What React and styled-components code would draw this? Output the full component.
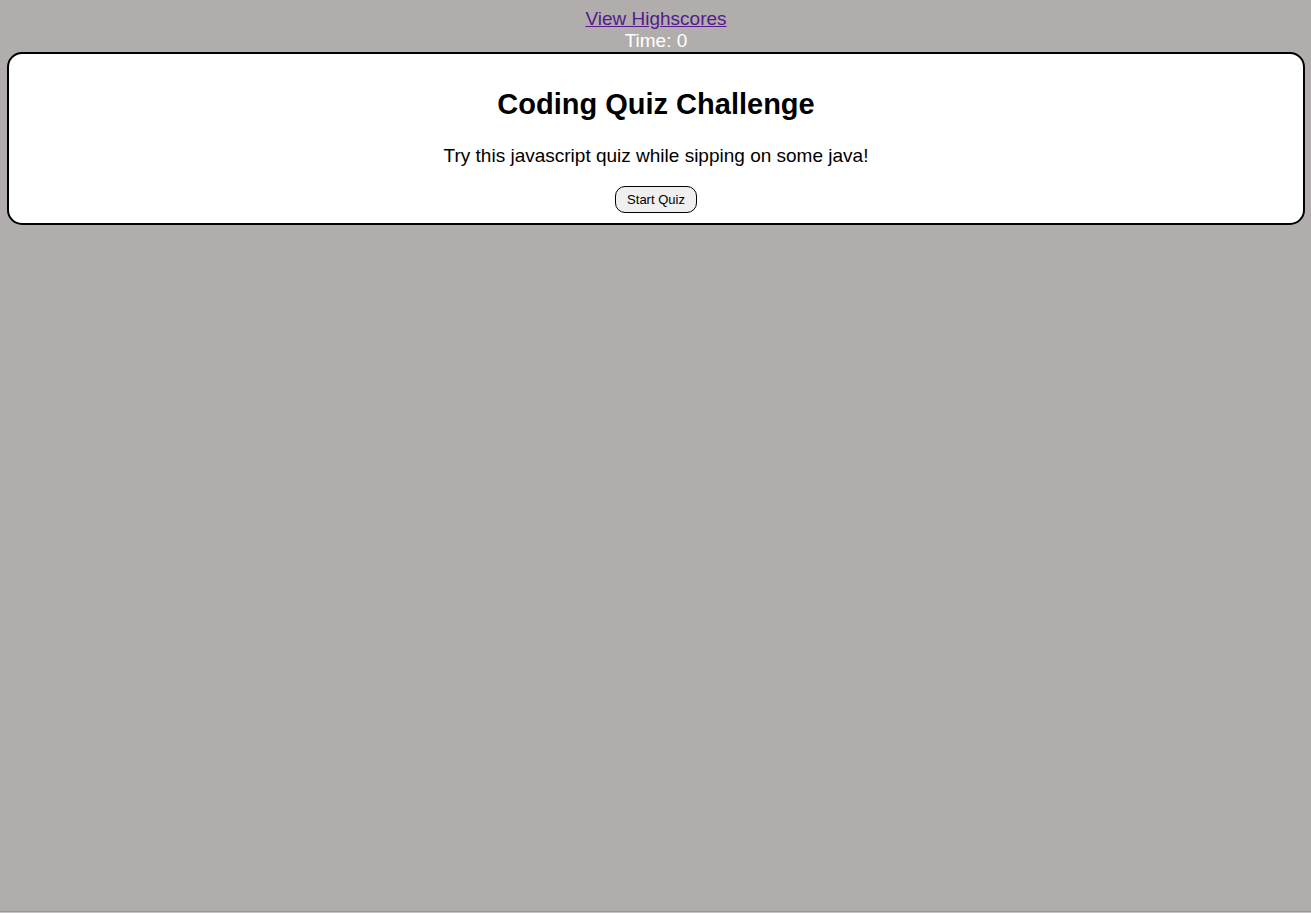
import React from "react";
import styled, { createGlobalStyle } from "styled-components";

const GlobalStyle = createGlobalStyle`
  body {
    box-sizing: border-box;
    min-height: 100vh;
    margin: 0;
    padding: 8px 6px 8px 7px;
    background: #b1adac;
    border-bottom: 1px solid #c8c4c5;
    box-shadow: inset 0 -1px #9a9496;
    color: #000;
    font-family: "Liberation Sans", Arial, sans-serif;
    font-size: 19px;
    line-height: 22px;
    text-align: center;
  }
`;

const Header = styled.header`
  display: flex;
  flex-direction: column;
  align-items: center;
`;

const ScoresLink = styled.a`
  color: #551a8b;
`;

const Timer = styled.div`
  color: #fff;
`;

const Card = styled.main`
  padding: 32px 10px 10px;
  background: #fff;
  border: 2px solid #000;
  border-radius: 15px;
`;

const Title = styled.h1`
  margin: 0 0 23px;
  font-size: 29px;
  line-height: 36px;
`;

const Intro = styled.p`
  margin: 0 0 19px;
`;

const StartButton = styled.button`
  display: block;
  margin: 0 auto;
  padding: 5px 11px;
  background: #efefef;
  color: #000;
  border: 1px solid #000;
  border-radius: 10px;
  font-family: inherit;
  font-size: 13px;
  line-height: 15px;
`;

export default function App() {
  return (
    <>
      <GlobalStyle />
      <Header>
        <ScoresLink href="#highscores">View Highscores</ScoresLink>
        <Timer>Time: 0</Timer>
      </Header>
      <Card>
        <Title>Coding Quiz Challenge</Title>
        <Intro>Try this javascript quiz while sipping on some java!</Intro>
        <StartButton type="button">Start Quiz</StartButton>
      </Card>
    </>
  );
}
